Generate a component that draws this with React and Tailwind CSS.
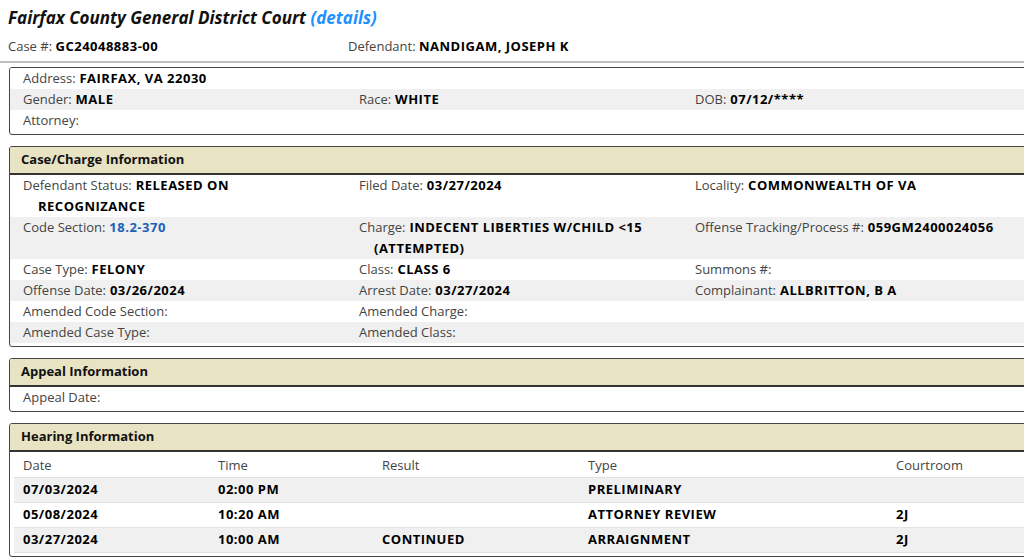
import React from "react";

const Field = ({ label, value, link }) => (
  <div className="pl-[15px] indent-[-15px] pr-[40px]">
    <span className="text-[#444]">{label}:</span>
    {value ? (
      <span className={"font-bold tracking-[0.5px] " + (link ? "text-[#1a62b8]" : "text-black")}> {value}</span>
    ) : null}
  </div>
);

const Row = ({ gray, children }) => (
  <div className={"grid grid-cols-[336px_336px_1fr] pl-[13px] leading-[21px] " + (gray ? "bg-[#f0f0f0]" : "bg-white")}>
    {children}
  </div>
);

const Box = ({ title, children, className = "" }) => (
  <div className={"ml-[9px] w-[1040px] border border-[#444] rounded-[3px] overflow-hidden pb-[3px] " + className}>
    {title ? (
      <div className="h-[28px] bg-[#e7e3c3] border-b-2 border-[#333] pl-[11px] flex items-center font-bold text-[#111]">
        {title}
      </div>
    ) : null}
    {children}
  </div>
);

export default function App() {
  const hearings = [
    ["07/03/2024", "02:00 PM", "", "PRELIMINARY", ""],
    ["05/08/2024", "10:20 AM", "", "ATTORNEY REVIEW", "2J"],
    ["03/27/2024", "10:00 AM", "CONTINUED", "ARRAIGNMENT", "2J"],
  ];
  return (
    <div className="w-[1024px] h-[560px] overflow-hidden bg-white font-['Open_Sans',sans-serif] text-[13px] text-[#222]">
      <div className="pl-[8px] pt-[6px] h-[33px] leading-[24px] text-[17px] font-bold italic text-[#111]">
        Fairfax County General District Court <span className="text-[#1e90ff]">(details)</span>
      </div>
      <div className="flex pl-[8px] h-[28px] items-center">
        <div className="w-[340px]">
          <span className="text-[#444]">Case #:</span>{" "}
          <span className="font-bold tracking-[0.5px] text-black">GC24048883-00</span>
        </div>
        <div>
          <span className="text-[#444]">Defendant:</span>{" "}
          <span className="font-bold tracking-[0.5px] text-black">NANDIGAM, JOSEPH K</span>
        </div>
      </div>
      <div className="h-[2px] bg-[#bdbdbd]" />
      <Box className="mt-[4px]">
        <Row>
          <Field label="Address" value="FAIRFAX, VA 22030" />
        </Row>
        <Row gray>
          <Field label="Gender" value="MALE" />
          <Field label="Race" value="WHITE" />
          <Field label="DOB" value="07/12/****" />
        </Row>
        <Row>
          <Field label="Attorney" />
        </Row>
      </Box>
      <Box title="Case/Charge Information" className="mt-[11px]">
        <Row>
          <Field label="Defendant Status" value="RELEASED ON RECOGNIZANCE" />
          <Field label="Filed Date" value="03/27/2024" />
          <Field label="Locality" value="COMMONWEALTH OF VA" />
        </Row>
        <Row gray>
          <Field label="Code Section" value="18.2-370" link />
          <Field label="Charge" value="INDECENT LIBERTIES W/CHILD <15 (ATTEMPTED)" />
          <Field label="Offense Tracking/Process #" value="059GM2400024056" />
        </Row>
        <Row>
          <Field label="Case Type" value="FELONY" />
          <Field label="Class" value="CLASS 6" />
          <Field label="Summons #" />
        </Row>
        <Row gray>
          <Field label="Offense Date" value="03/26/2024" />
          <Field label="Arrest Date" value="03/27/2024" />
          <Field label="Complainant" value="ALLBRITTON, B A" />
        </Row>
        <Row>
          <Field label="Amended Code Section" />
          <Field label="Amended Charge" />
          <div />
        </Row>
        <Row gray>
          <Field label="Amended Case Type" />
          <Field label="Amended Class" />
          <div />
        </Row>
      </Box>
      <Box title="Appeal Information" className="mt-[11px]">
        <Row>
          <Field label="Appeal Date" />
        </Row>
      </Box>
      <Box title="Hearing Information" className="mt-[11px]">
        <div className="ml-[4px] mt-[2px]">
          <div className="grid grid-cols-[204px_164px_206px_308px_1fr] h-[24px] items-center border-b border-[#dde0e6] text-[#444]">
            <div className="pl-[9px]">Date</div>
            <div>Time</div>
            <div>Result</div>
            <div>Type</div>
            <div>Courtroom</div>
          </div>
          {hearings.map((h, i) => (
            <div
              key={i}
              className={
                "grid grid-cols-[204px_164px_206px_308px_1fr] h-[25px] items-center font-bold tracking-[0.5px] text-black border-b border-[#e2e2e2] " +
                (i % 2 === 0 ? "bg-[#f0f0f0]" : "bg-white")
              }
            >
              <div className="pl-[9px]">{h[0]}</div>
              <div>{h[1]}</div>
              <div>{h[2]}</div>
              <div>{h[3]}</div>
              <div>{h[4]}</div>
            </div>
          ))}
        </div>
      </Box>
    </div>
  );
}
